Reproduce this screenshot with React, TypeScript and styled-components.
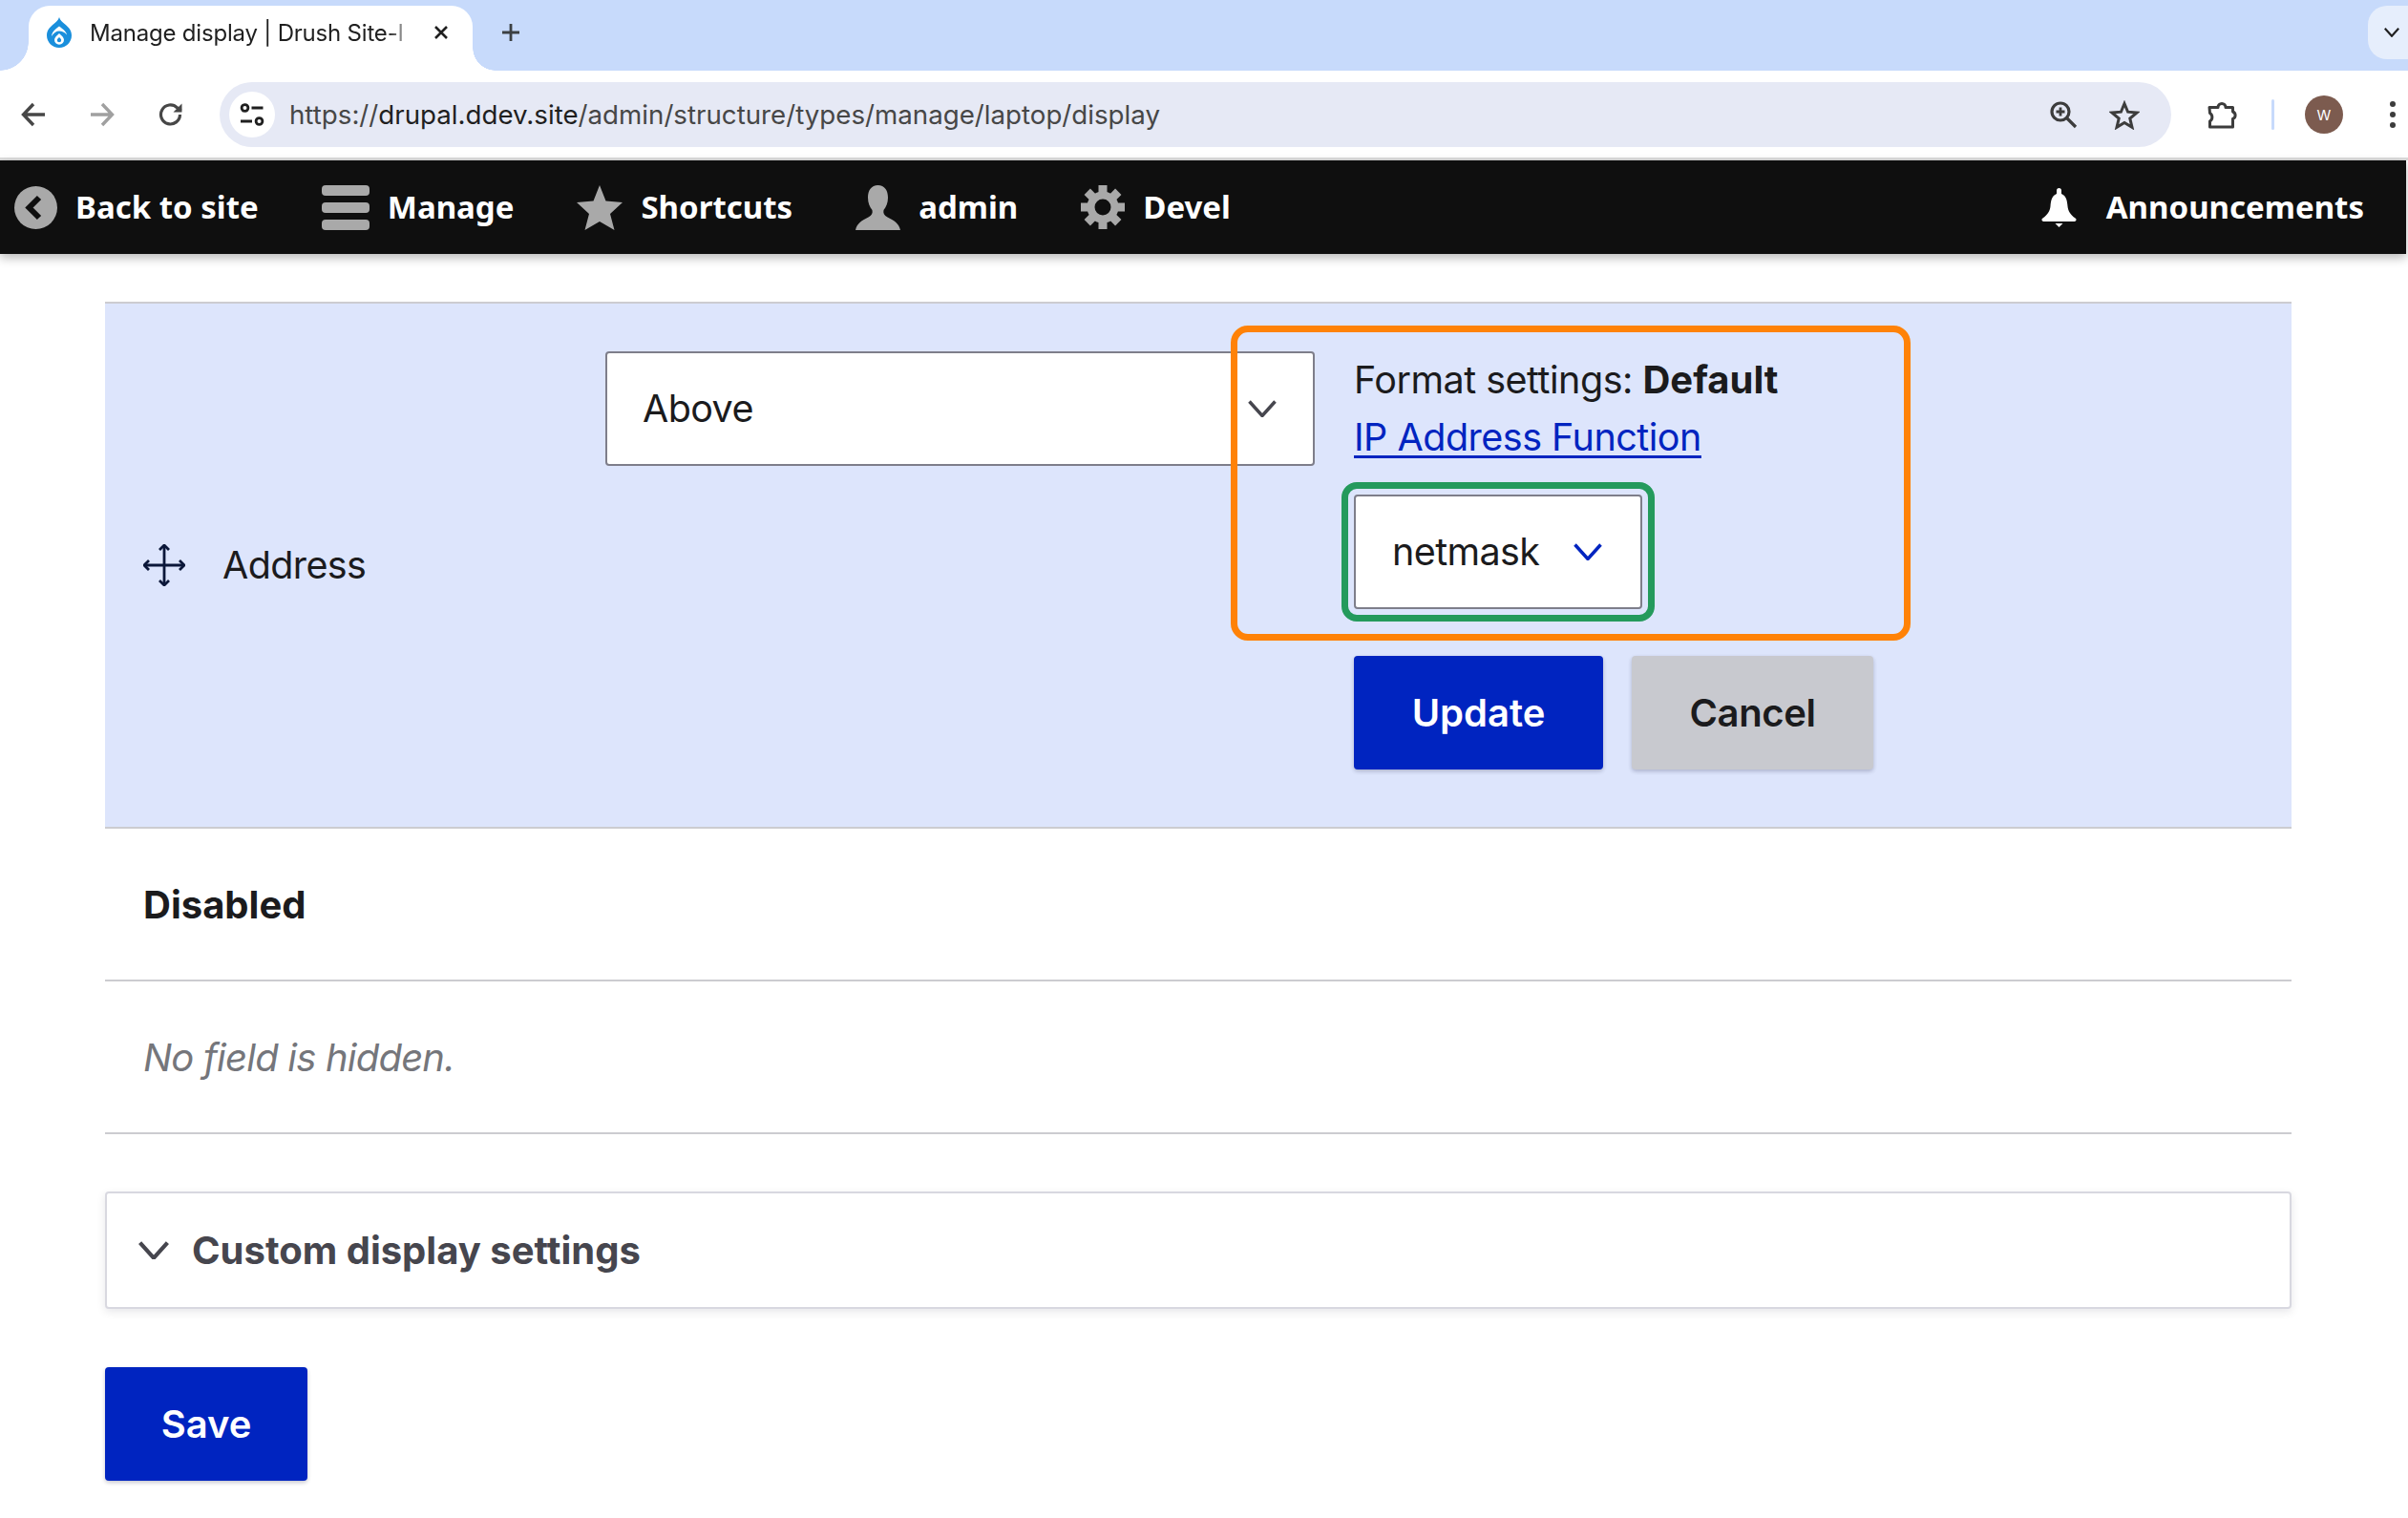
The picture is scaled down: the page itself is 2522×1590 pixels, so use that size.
import React from 'react';
import styled, { createGlobalStyle } from 'styled-components';

const GlobalStyle = createGlobalStyle`
    html, body {
        margin: 0;
        padding: 0;
        background: #fff;
        font-family: Inter, "Liberation Sans", sans-serif;
        color: #1b1b1d;
    }
    * {
        box-sizing: border-box;
    }
`;

const Page = styled.div`
    width: 2522px;
    height: 1590px;
    overflow: hidden;
    background: #fff;
`;

/* Browser chrome */

const TabStrip = styled.div`
    height: 74px;
    background: #c7dafb;
    display: flex;
    align-items: flex-start;
    padding: 6px 0 0 30px;
`;

const Tab = styled.div`
    position: relative;
    width: 465px;
    height: 68px;
    background: #fff;
    border-radius: 22px 22px 0 0;
    display: flex;
    align-items: center;
    padding: 0 0 12px 19px;

    &::before,
    &::after {
        content: '';
        position: absolute;
        bottom: 0;
        width: 30px;
        height: 30px;
    }

    &::before {
        left: -30px;
        background: radial-gradient(circle at 0 0, #c7dafb 29.5px, #fff 30px);
    }

    &::after {
        right: -24px;
        width: 24px;
        height: 24px;
        background: radial-gradient(circle at 100% 0, #c7dafb 23.5px, #fff 24px);
    }
`;

const TabTitle = styled.span`
    width: 340px;
    margin-left: 19px;
    font-size: 24px;
    letter-spacing: -0.2px;
    color: #1f1f1f;
    white-space: nowrap;
    -webkit-mask-image: linear-gradient(to right, #000 92%, transparent 100%);
    mask-image: linear-gradient(to right, #000 92%, transparent 100%);
`;

const TabClose = styled.span`
    display: flex;
    margin-left: 20px;
`;

const NewTab = styled.span`
    display: flex;
    margin: 18px 0 0 30px;
`;

const TabSearch = styled.div`
    margin-left: auto;
    width: 42px;
    height: 56px;
    background: #e6eefc;
    border-radius: 20px 0 0 20px;
    display: flex;
    align-items: center;
    padding-left: 17px;
`;

const Toolbar = styled.div`
    height: 94px;
    background: #fff;
    border-bottom: 3px solid #dcdcdc;
    display: flex;
    align-items: flex-start;
    padding: 12px 0 0 0;
`;

const NavGroup = styled.div`
    width: 230px;
    height: 68px;
    display: flex;
    align-items: center;
    padding-left: 22px;
    gap: 46px;
`;

const Omnibox = styled.div`
    width: 2044px;
    height: 68px;
    background: #e6e9f5;
    border-radius: 34px;
    display: flex;
    align-items: center;
    padding: 0 33px 0 10px;
`;

const SiteInfo = styled.span`
    width: 48px;
    height: 48px;
    border-radius: 50%;
    background: #fff;
    display: flex;
    align-items: center;
    justify-content: center;
`;

const Url = styled.span`
    margin-left: 15px;
    font-size: 27.7px;
    color: #474747;
    white-space: nowrap;

    b {
        font-weight: 400;
        color: #1f1f1f;
    }
`;

const OmniActions = styled.div`
    margin-left: auto;
    display: flex;
    align-items: center;
    gap: 33px;
`;

const ToolbarEnd = styled.div`
    height: 68px;
    flex: 1;
    display: flex;
    align-items: center;
    padding-left: 38px;
`;

const Separator = styled.span`
    width: 3px;
    height: 32px;
    margin: 0 32px 0 35px;
    border-radius: 2px;
    background: #c7dafb;
`;

const Avatar = styled.span`
    width: 40px;
    height: 40px;
    border-radius: 50%;
    background: #7c5b4f;
    color: #fff;
    font-size: 15px;
    display: flex;
    align-items: center;
    justify-content: center;
`;

const Dots = styled.span`
    display: flex;
    margin-left: 49px;
`;

/* Drupal admin toolbar */

const AdminBar = styled.nav`
    width: 2520px;
    height: 98px;
    background: #0f0f0f;
    box-shadow: 0 4px 10px rgba(0, 0, 0, 0.28);
    display: flex;
    align-items: center;
    padding: 0 44px 0 15px;
    gap: 66px;
    font-family: "Noto Sans", "Open Sans", sans-serif;
`;

const BarItem = styled.a<{ $end?: boolean }>`
    display: flex;
    align-items: center;
    gap: ${({ $end }) => ($end ? '30px' : '19px')};
    margin-left: ${({ $end }) => ($end ? 'auto' : '0')};
    color: #fff;
    font-size: 33px;
    font-weight: 700;
    white-space: nowrap;
`;

const BarLabel = styled.span`
    margin-top: -2px;
`;

/* Manage display form */

const Main = styled.main`
    padding: 50px 122px 0 110px;
`;

const FieldRow = styled.section`
    display: grid;
    grid-template-columns: 524px 743px 1fr;
    height: 552px;
    background: #dde5fc;
    border-top: 2px solid #ccccd0;
    border-bottom: 2px solid #ccccd0;
`;

const FieldName = styled.div`
    align-self: center;
    display: flex;
    align-items: center;
    gap: 39px;
    padding-left: 40px;
    font-size: 39.5px;
    letter-spacing: -0.6px;
`;

const SelectCell = styled.div`
    padding-top: 50px;
`;

const Select = styled.div<{ $active?: boolean }>`
    height: 120px;
    background: #fff;
    border: 2px solid #7e7e8a;
    border-radius: 4px;
    display: flex;
    align-items: center;
    font-size: 39.5px;
    letter-spacing: -0.6px;
    padding: 0 ${({ $active }) => ($active ? '40px' : '38px')} 0 ${({ $active }) => ($active ? '38px' : '37px')};
    justify-content: space-between;
    width: ${({ $active }) => ($active ? '302px' : '100%')};
`;

const FormatCell = styled.div`
    position: relative;
    padding: 50px 0 0 41px;
`;

const OrangeFrame = styled.div`
    position: absolute;
    top: 23px;
    left: -88px;
    width: 712px;
    height: 330px;
    border: 7px solid #ff8207;
    border-radius: 18px;
    pointer-events: none;
`;

const FormatLine = styled.div`
    height: 59px;
    font-size: 39.5px;
    line-height: 59px;
    letter-spacing: -0.5px;
    white-space: nowrap;

    & + & {
        margin-top: 2px;
    }

    strong {
        font-weight: 700;
        font-size: 40px;
        letter-spacing: 0;
    }
`;

const FormatLink = styled.a`
    color: #0024c0;
    text-decoration: underline;
    text-underline-offset: 5px;
    text-decoration-thickness: 3px;
`;

const SelectHolder = styled.div`
    position: relative;
    width: 302px;
    margin-top: 30px;
`;

const GreenFrame = styled.div`
    position: absolute;
    inset: -13px;
    border: 7px solid #249a5c;
    border-radius: 16px;
    pointer-events: none;
`;

const Actions = styled.div`
    display: flex;
    gap: 30px;
    margin-top: 49px;
`;

const Button = styled.button<{ $secondary?: boolean; $width: number }>`
    width: ${({ $width }) => $width}px;
    height: 119px;
    border: 0;
    border-radius: 4px;
    background: ${({ $secondary }) => ($secondary ? '#c8c9cf' : '#0024c0')};
    color: ${({ $secondary }) => ($secondary ? '#1b1b1d' : '#fff')};
    font-family: Inter, "Liberation Sans", sans-serif;
    font-size: 40px;
    font-weight: 600;
    letter-spacing: ${({ $secondary }) => ($secondary ? '-0.4px' : '0')};
    box-shadow: 0 2px 4px rgba(0, 0, 40, 0.22);
    padding: 0;
`;

const RegionRow = styled.div<{ $italic?: boolean }>`
    height: 160px;
    border-bottom: 2px solid #ccccd0;
    display: flex;
    align-items: center;
    padding-left: 40px;
    font-size: 40px;
    font-weight: ${({ $italic }) => ($italic ? 400 : 700)};
    font-style: ${({ $italic }) => ($italic ? 'italic' : 'normal')};
    letter-spacing: ${({ $italic }) => ($italic ? '-0.8px' : '0')};
    color: ${({ $italic }) => ($italic ? '#75767b' : '#1b1b1d')};
`;

const DetailsBox = styled.div`
    height: 123px;
    margin-top: 60px;
    border: 2px solid #d8d8e0;
    border-radius: 4px;
    background: #fff;
    box-shadow: 0 3px 10px rgba(0, 0, 40, 0.1);
    display: flex;
    align-items: center;
    gap: 24px;
    padding-left: 33px;
    font-size: 40px;
    font-weight: 700;
    color: #46464e;
`;

const SaveRow = styled.div`
    margin-top: 61px;
`;

/* Icons */

const Chevron = ({ color, width = 30, weight = 3.5 }: { color: string; width?: number; weight?: number }) => (
    <svg width={width} height={width * 0.62} viewBox="0 0 30 18.6" fill="none">
        <path d="M1.5 1.5 15 16.5 28.5 1.5" stroke={color} strokeWidth={weight} />
    </svg>
);

const DrupalDrop = () => (
    <svg width="26" height="32" viewBox="0 0 26 32">
        <path d="M13 0c1 3.4 3.2 5 5.6 7C21.800 9.500 26 13.300 26 19c0 7.300-5.700 13-13 13S0 26.300 0 19C0 13.300 4.200 9.500 7.400 7 9.800 5 12 3.400 13 0Z" fill="#1a8fdc" />
        <path d="M13 9.500c-2.500 2-7.500 5-8 10.500 2-3.500 5-5.500 8-5.500 3 0 5.500 1 8 4-.5-4-5.500-7-8-9Z" fill="#fff" />
        <path d="M13 17c-2.500 2.300-5 4-5 6.800a5 5 0 0 0 10 0c0-2.800-2.500-4.500-5-6.800Z" fill="#fff" />
        <path d="M13 21c-1 1-2.200 1.800-2.200 3.100a2.200 2.200 0 0 0 4.400 0C15.200 22.800 14 22 13 21Z" fill="#1a8fdc" />
    </svg>
);

const CloseIcon = () => (
    <svg width="16" height="16" viewBox="0 0 16 16">
        <path d="M2 2l12 12M14 2 2 14" stroke="#1f1f1f" strokeWidth="2.6" />
    </svg>
);

const PlusIcon = () => (
    <svg width="20" height="20" viewBox="0 0 20 20">
        <path d="M10 1v18M1 10h18" stroke="#3c4043" strokeWidth="2.8" />
    </svg>
);

const ArrowIcon = ({ color, flip }: { color: string; flip?: boolean }) => (
    <svg width="26" height="26" viewBox="0 0 26 26" fill="none">
        <g transform={flip ? 'rotate(180 13 13)' : undefined}>
            <path d="M25 13H3M13 2 2.500 13 13 24" stroke={color} strokeWidth="3.4" />
        </g>
    </svg>
);

const ReloadIcon = () => (
    <svg width="26" height="26" viewBox="0 0 26 26" fill="none">
        <path d="M22.500 13A10 10 0 1 1 19.500 5.800L23.500 9" stroke="#474747" strokeWidth="3.2" />
        <path d="M24.500 1.500V10.500H15.500Z" fill="#474747" />
    </svg>
);

const TuneIcon = () => (
    <svg width="26" height="26" viewBox="0 0 26 26" fill="none" stroke="#1f1f1f" strokeWidth="2.8">
        <circle cx="5.500" cy="6" r="3.400" />
        <path d="M12.500 6H24.500M1 20H13" />
        <circle cx="20.500" cy="20" r="3.400" />
    </svg>
);

const ZoomIcon = () => (
    <svg width="30" height="30" viewBox="0 0 30 30" fill="none" stroke="#3c3c3c">
        <circle cx="12" cy="12" r="9" strokeWidth="3.2" />
        <path d="M18.500 18.500 28 28" strokeWidth="3.2" />
        <path d="M12 7.500v9M7.500 12h9" strokeWidth="2.800" />
    </svg>
);

const StarOutline = () => (
    <svg width="32" height="31" viewBox="0 0 32 31" fill="none">
        <path d="M16 3.500 19.600 12.200 29 13 21.800 19.100 24 28.300 16 23.400 8 28.300 10.200 19.100 3 13 12.400 12.200Z" stroke="#3c3c3c" strokeWidth="3" />
    </svg>
);

const PuzzleIcon = () => (
    <svg width="32" height="32" viewBox="0 0 32 32" fill="none">
        <path d="M2 8.500H11a4 4 0 0 1 8 0h7.500V13a4 4 0 0 1 0 7.500V29H2.500v-6a5 5 0 0 0 0-8.500Z" stroke="#3c3c3c" strokeWidth="3" strokeLinejoin="round" />
    </svg>
);

const DotsIcon = () => (
    <svg width="6" height="28" viewBox="0 0 6 28" fill="#3c3c3c">
        <circle cx="3" cy="3" r="3" />
        <circle cx="3" cy="14" r="3" />
        <circle cx="3" cy="25" r="3" />
    </svg>
);

const BackIcon = () => (
    <svg width="45" height="45" viewBox="0 0 45 45">
        <circle cx="22.500" cy="22.500" r="22.500" fill="#a9a9a9" />
        <path d="M26 12 15.500 22.500 26 33" fill="none" stroke="#0f0f0f" strokeWidth="6" />
    </svg>
);

const BarsIcon = () => (
    <svg width="50" height="47" viewBox="0 0 50 47" fill="#a9a9a9">
        <rect x="0" y="0" width="50" height="11" rx="4" />
        <rect x="0" y="18" width="50" height="11" rx="4" />
        <rect x="0" y="36" width="50" height="11" rx="4" />
    </svg>
);

const StarIcon = () => (
    <svg width="48" height="47" viewBox="0 0 48 47" fill="#a9a9a9">
        <path d="M24 0 30.500 16.500 48 18 35 30 39.500 47 24 38 8.500 47 13 30 0 18 17.500 16.500Z" />
    </svg>
);

const UserIcon = () => (
    <svg width="47" height="47" viewBox="0 0 47 47" fill="#a9a9a9">
        <path d="M23.500 0C16.500 0 13 5.500 13 13c0 5.500 2 10 4.500 13 .8 3-.5 5.500-4 7.500C7 36.500 1.500 40 0 47h47c-1.500-7-7-10.500-13.500-13.500-3.500-2-4.800-4.500-4-7.500C32 23 34 18.500 34 13 34 5.500 30.500 0 23.500 0Z" />
    </svg>
);

const GearIcon = () => (
    <svg width="46" height="46" viewBox="0 0 46 46">
        {[0, 45, 90, 135, 180, 225, 270, 315].map((angle) => (
            <rect key={angle} x="18.500" y="0" width="9" height="10" fill="#a9a9a9" transform={`rotate(${angle} 23 23)`} />
        ))}
        <circle cx="23" cy="23" r="12.500" fill="none" stroke="#a9a9a9" strokeWidth="8" />
    </svg>
);

const BellIcon = () => (
    <svg width="39" height="41" viewBox="0 0 39 41" fill="#fff">
        <path d="M19.500 0a2.500 2.500 0 0 1 2.500 2.500V6C27 8 28 13 28.500 19c.4 5 3 9 8 12.500 1.500 1 1.500 2.500-.5 3.500H3c-2-1-2-2.500-.5-3.500 5-3.500 7.600-7.500 8-12.500C11 13 12 8 17 6V2.500A2.500 2.500 0 0 1 19.500 0Z" />
        <path d="M15.500 37h8l-4 4Z" />
    </svg>
);

const MoveIcon = () => (
    <svg width="44" height="44" viewBox="0 0 44 44" fill="none" stroke="#0b1739" strokeWidth="2.800">
        <path d="M22 1v42M1 22h42" />
        <path d="M17 6l5-5 5 5M17 38l5 5 5-5M6 17l-5 5 5 5M38 17l5 5-5 5" />
    </svg>
);

const App = () => (
    <Page>
        <GlobalStyle />
        <TabStrip>
            <Tab>
                <DrupalDrop />
                <TabTitle>Manage display | Drush Site-I</TabTitle>
                <TabClose><CloseIcon /></TabClose>
            </Tab>
            <NewTab><PlusIcon /></NewTab>
            <TabSearch><Chevron color="#1f1f1f" width={16} weight={4} /></TabSearch>
        </TabStrip>
        <Toolbar>
            <NavGroup>
                <ArrowIcon color="#474747" />
                <ArrowIcon color="#a0a0a0" flip />
                <ReloadIcon />
            </NavGroup>
            <Omnibox>
                <SiteInfo><TuneIcon /></SiteInfo>
                <Url>https://<b>drupal.ddev.site</b>/admin/structure/types/manage/laptop/display</Url>
                <OmniActions>
                    <ZoomIcon />
                    <StarOutline />
                </OmniActions>
            </Omnibox>
            <ToolbarEnd>
                <PuzzleIcon />
                <Separator />
                <Avatar>W</Avatar>
                <Dots><DotsIcon /></Dots>
            </ToolbarEnd>
        </Toolbar>
        <AdminBar>
            <BarItem><BackIcon /><BarLabel>Back to site</BarLabel></BarItem>
            <BarItem><BarsIcon /><BarLabel>Manage</BarLabel></BarItem>
            <BarItem><StarIcon /><BarLabel>Shortcuts</BarLabel></BarItem>
            <BarItem><UserIcon /><BarLabel>admin</BarLabel></BarItem>
            <BarItem><GearIcon /><BarLabel>Devel</BarLabel></BarItem>
            <BarItem $end><BellIcon /><BarLabel>Announcements</BarLabel></BarItem>
        </AdminBar>
        <Main>
            <FieldRow>
                <FieldName><MoveIcon />Address</FieldName>
                <SelectCell>
                    <Select>Above<Chevron color="#46464e" /></Select>
                </SelectCell>
                <FormatCell>
                    <OrangeFrame />
                    <FormatLine>Format settings: <strong>Default</strong></FormatLine>
                    <FormatLine><FormatLink href="#">IP Address Function</FormatLink></FormatLine>
                    <SelectHolder>
                        <GreenFrame />
                        <Select $active>netmask<Chevron color="#0024c0" /></Select>
                    </SelectHolder>
                    <Actions>
                        <Button $width={261}>Update</Button>
                        <Button $width={253} $secondary>Cancel</Button>
                    </Actions>
                </FormatCell>
            </FieldRow>
            <RegionRow>Disabled</RegionRow>
            <RegionRow $italic>No field is hidden.</RegionRow>
            <DetailsBox><Chevron color="#46464e" width={32} weight={4} />Custom display settings</DetailsBox>
            <SaveRow><Button $width={212}>Save</Button></SaveRow>
        </Main>
    </Page>
);

export default App;
